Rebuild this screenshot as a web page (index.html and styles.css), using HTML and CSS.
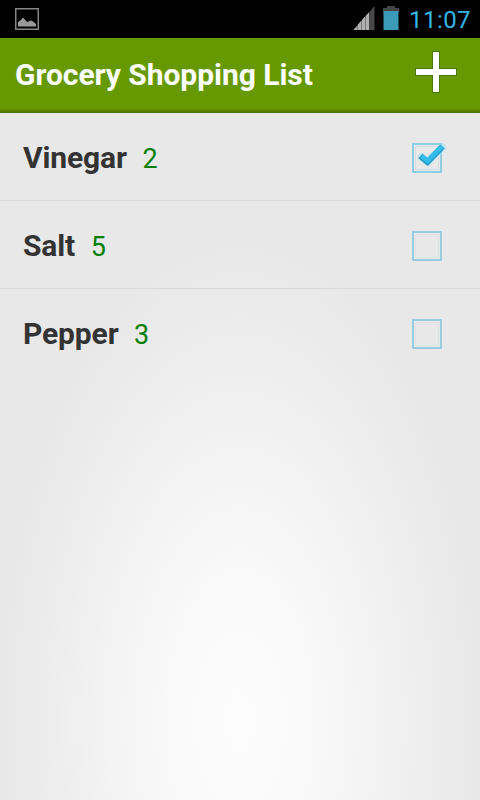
FILE: index.html
```html
<!DOCTYPE html>
<html lang="en">
<head>
<meta charset="utf-8">
<title>Grocery Shopping List</title>
<link rel="stylesheet" href="styles.css">
</head>
<body>
<div class="screen">
  <div class="status">
    <svg class="picture" width="24" height="22" viewBox="0 0 24 22"><rect x=".75" y=".75" width="22.5" height="20.5" fill="none" stroke="#858585" stroke-width="1.5"/><path d="M3 18.5V14L6 12L8 9.500L12 14L16 12.500L18 13.500L21 16V18.500Z" fill="#999"/></svg>
    <svg class="signal" width="22" height="24" viewBox="0 0 22 24"><path d="M0 24L16.500 6V24Z" fill="#777"/><path d="M1 24L4 20.500V24ZM5 24V18.500L8 15V24ZM9 24V14L12 10.500V24ZM13 24V9.500L16 6.500V24Z" fill="#b0b0b0"/><path d="M16.500 24V6L21.500 0V24Z" fill="#484848"/></svg>
    <svg class="battery" width="16" height="24" viewBox="0 0 16 24"><path d="M0 6V2H4V0H12V2H16V6Z" fill="#454545"/><path d="M.5 5H15.500V24H.5Z" fill="#3c9ab9"/></svg>
    <span class="clock">11:07</span>
  </div>
  <header class="bar">
    <h1 class="title">Grocery Shopping List</h1>
    <svg class="add" width="46" height="46" viewBox="0 0 46 46"><path d="M20 3H26V20H43V26H26V43H20V26H3V20H20Z" fill="#fff" stroke="#3f6500" stroke-opacity=".65" stroke-width="2" paint-order="stroke"/></svg>
  </header>
  <ul class="list">
    <li class="row"><span class="name">Vinegar</span><span class="count">2</span>
      <svg class="box" width="38" height="38" viewBox="0 0 38 38"><path d="M5 5H33V33H5Z" fill="none" stroke="#8fcde0" stroke-width="2"/><path d="M7.500 7.500H30.500V30.500H7.500Z" fill="none" stroke="#d0dfe4"/><path d="M13.500 18L19.500 23L34 8.500" fill="none" stroke="#8fe0fa" stroke-opacity=".5" stroke-width="8" stroke-linejoin="round" stroke-linecap="round"/><path d="M12.500 17L19.500 23L34.500 7.500" fill="none" stroke="#239bc7" stroke-width="6"/><path d="M13.500 17L19.500 22L34 7.500" fill="none" stroke="#32bdec" stroke-width="4"/></svg></li>
    <li class="row"><span class="name">Salt</span><span class="count">5</span>
      <svg class="box" width="38" height="38" viewBox="0 0 38 38"><path d="M5 5H33V33H5Z" fill="none" stroke="#97cde0" stroke-width="2"/><path d="M7.500 7.500H30.500V30.500H7.500Z" fill="none" stroke="#dce3e5"/></svg></li>
    <li class="row"><span class="name">Pepper</span><span class="count">3</span>
      <svg class="box" width="38" height="38" viewBox="0 0 38 38"><path d="M5 5H33V33H5Z" fill="none" stroke="#97cde0" stroke-width="2"/><path d="M7.500 7.500H30.500V30.500H7.500Z" fill="none" stroke="#dce3e5"/></svg></li>
  </ul>
</div>
</body>
</html>
```
FILE: styles.css
```css
* { box-sizing: border-box; }
body { margin: 0; }
.screen {
  display: flex;
  flex-direction: column;
  width: 480px;
  height: 800px;
  overflow: hidden;
  font-family: Roboto, sans-serif;
  background: radial-gradient(ellipse 240px 480px at 240px 720px, #fcfcfc 0%, #fafafa 25%, #f3f3f3 55%, #ececec 82%, #e8e8e8 100%);
}
.status {
  display: flex;
  height: 38px;
  padding: 0 10px 0 15px;
  background: #000;
}
.picture { margin-top: 8px; }
.signal { margin: 6px 8px 0 auto; }
.battery { margin: 6px 10px 0 0; }
.clock {
  width: 61px;
  font-size: 24px;
  letter-spacing: 0.45px;
  line-height: 40px;
  color: #33b5e5;
  white-space: nowrap;
}
.bar {
  display: flex;
  justify-content: space-between;
  height: 75px;
  padding: 0 21px 0 15px;
  background: linear-gradient(#690 0 70px, #5c8a00 72px, #466a00 75px);
}
.title {
  margin: 0;
  font-size: 30px;
  font-weight: 700;
  letter-spacing: -0.04px;
  line-height: 74px;
  color: #fff;
  white-space: nowrap;
}
.add { margin-top: 11px; }
.list { margin: 0; padding: 0; list-style: none; }
.row {
  display: flex;
  align-items: baseline;
  height: 88px;
  padding: 0 34px 0 23px;
  line-height: 90px;
  border-bottom: 1px solid #dadada;
}
.row:last-child { border-bottom: 0; }
.name { font-size: 30px; font-weight: 700; letter-spacing: -0.12px; color: #333; }
.count { margin-left: 15.5px; font-size: 27px; color: #008000; }
.box { align-self: flex-start; margin: 26px 0 0 auto; }
```
